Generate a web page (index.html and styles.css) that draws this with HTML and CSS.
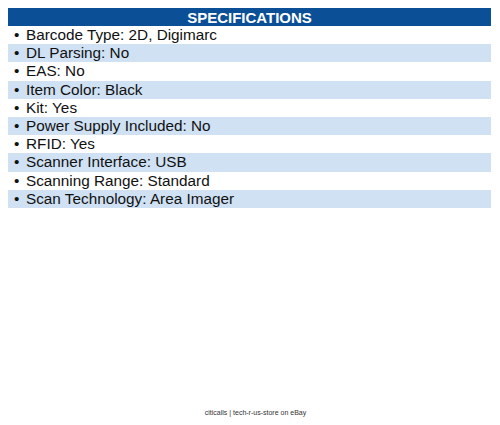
FILE: index.html
```html
<!DOCTYPE html>
<html lang="en">
<head>
  <meta charset="UTF-8">
  <title>Specifications</title>
  <link rel="stylesheet" href="styles.css">
</head>
<body>
  <div class="page">
    <div class="specs">
      <div class="specsHeader">SPECIFICATIONS</div>
      <ul class="specsList">
        <li>Barcode Type: 2D, Digimarc</li>
        <li class="shaded">DL Parsing: No</li>
        <li>EAS: No</li>
        <li class="shaded">Item Color: Black</li>
        <li>Kit: Yes</li>
        <li class="shaded">Power Supply Included: No</li>
        <li>RFID: Yes</li>
        <li class="shaded">Scanner Interface: USB</li>
        <li>Scanning Range: Standard</li>
        <li class="shaded">Scan Technology: Area Imager</li>
      </ul>
    </div>
    <div class="footer">citicalls | tech-r-us-store on eBay</div>
  </div>
</body>
</html>
```

FILE: styles.css
```css
body {
  margin: 0;
  background-color: #fff;
  font-family: "Liberation Sans", Arial, sans-serif;
}

.page {
  display: flex;
  flex-direction: column;
  height: 425px;
  padding: 8px 9px 0 8px;
  box-sizing: border-box;
}

.specs {
  flex: 1;
}

.specsHeader {
  height: 18px;
  line-height: 19px;
  background-color: #0b5096;
  color: #fff;
  font-weight: bold;
  font-size: 15px;
  text-align: center;
}

.specsList {
  list-style: none;
  margin: 0;
  padding: 0;
}

.specsList li {
  height: 18.2px;
  line-height: 18px;
  font-size: 15.3px;
  color: #111;
  padding-left: 6px;
}

.specsList li::before {
  content: "\2022";
  display: inline-block;
  width: 12px;
}

.specsList li.shaded {
  background-color: #cfe1f3;
}

.footer {
  height: 16px;
  padding-left: 12px;
  font-size: 7px;
  color: #333;
  text-align: center;
}
```
